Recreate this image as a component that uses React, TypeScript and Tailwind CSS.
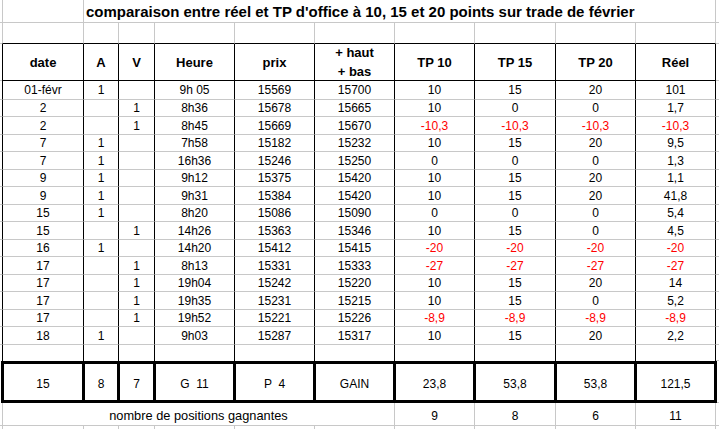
import React from "react";

type Row = {
  d: string;
  a: string;
  v: string;
  h: string;
  p: string;
  hb: string;
  t10: string;
  t15: string;
  t20: string;
  r: string;
  red?: boolean;
};

const rows: Row[] = [
  { d: "01-févr", a: "1", v: "", h: "9h 05", p: "15569", hb: "15700", t10: "10", t15: "15", t20: "20", r: "101" },
  { d: "2", a: "", v: "1", h: "8h36", p: "15678", hb: "15665", t10: "10", t15: "0", t20: "0", r: "1,7" },
  { d: "2", a: "", v: "1", h: "8h45", p: "15669", hb: "15670", t10: "-10,3", t15: "-10,3", t20: "-10,3", r: "-10,3", red: true },
  { d: "7", a: "1", v: "", h: "7h58", p: "15182", hb: "15232", t10: "10", t15: "15", t20: "20", r: "9,5" },
  { d: "7", a: "1", v: "", h: "16h36", p: "15246", hb: "15250", t10: "0", t15: "0", t20: "0", r: "1,3" },
  { d: "9", a: "1", v: "", h: "9h12", p: "15375", hb: "15420", t10: "10", t15: "15", t20: "20", r: "1,1" },
  { d: "9", a: "1", v: "", h: "9h31", p: "15384", hb: "15420", t10: "10", t15: "15", t20: "20", r: "41,8" },
  { d: "15", a: "1", v: "", h: "8h20", p: "15086", hb: "15090", t10: "0", t15: "0", t20: "0", r: "5,4" },
  { d: "15", a: "", v: "1", h: "14h26", p: "15363", hb: "15346", t10: "10", t15: "15", t20: "0", r: "4,5" },
  { d: "16", a: "1", v: "", h: "14h20", p: "15412", hb: "15415", t10: "-20", t15: "-20", t20: "-20", r: "-20", red: true },
  { d: "17", a: "", v: "1", h: "8h13", p: "15331", hb: "15333", t10: "-27", t15: "-27", t20: "-27", r: "-27", red: true },
  { d: "17", a: "", v: "1", h: "19h04", p: "15242", hb: "15220", t10: "10", t15: "15", t20: "20", r: "14" },
  { d: "17", a: "", v: "1", h: "19h35", p: "15231", hb: "15215", t10: "10", t15: "15", t20: "0", r: "5,2" },
  { d: "17", a: "", v: "1", h: "19h52", p: "15221", hb: "15226", t10: "-8,9", t15: "-8,9", t20: "-8,9", r: "-8,9", red: true },
  { d: "18", a: "1", v: "", h: "9h03", p: "15287", hb: "15317", t10: "10", t15: "15", t20: "20", r: "2,2" },
];

const rowH = [
  "h-[19px]", "h-[17px]", "h-[18px]", "h-[17px]", "h-[18px]", "h-[17px]", "h-[18px]", "h-[17px]",
  "h-[18px]", "h-[17px]", "h-[18px]", "h-[17px]", "h-[18px]", "h-[17px]", "h-[18px]",
];

// widths for columns (border-box) in normal rows; first includes left border
const W = ["w-[82px]", "w-[35px]", "w-[36px]", "w-[80px]", "w-[80px]", "w-[80px]", "w-[80px]", "w-[81px]", "w-[80px]", "w-[80px]"];

function Cell({
  w,
  className = "",
  children,
}: {
  w: string;
  className?: string;
  children?: React.ReactNode;
}) {
  return (
    <div className={`${w} shrink-0 flex items-center justify-center whitespace-pre ${className}`}>
      {children}
    </div>
  );
}

export default function App() {
  return (
    <div
      className="w-[719px] h-[429px] overflow-hidden bg-white text-black text-[12px] leading-none"
      style={{ fontFamily: '"Liberation Sans", Arial, sans-serif' }}
    >
      {/* Title row */}
      <div className="flex h-[23px]">
        <div className="w-[2px] shrink-0 border-b border-b-[#c8c8c8]" />
        <Cell w="w-[82px]" className="border-l border-r border-b border-l-[#c8c8c8] border-r-[#c8c8c8] border-b-[#c8c8c8]" />
        <div className="w-[632px] shrink-0 flex items-end pb-[3px] pl-[2px] border-r border-b border-r-[#c8c8c8] border-b-[#c8c8c8] text-[15px] font-bold whitespace-nowrap">
          comparaison entre réel et TP d'office à 10, 15 et 20 points sur trade de février
        </div>
        <div className="flex-1 border-b border-b-[#c8c8c8]" />
      </div>

      {/* Empty row */}
      <div className="flex h-[21px]">
        <div className="w-[2px] shrink-0 border-b border-b-[#c8c8c8]" />
        {W.map((w, i) => (
          <Cell
            key={i}
            w={w}
            className={`border-r border-b border-r-[#c8c8c8] border-b-black ${i === 0 ? "border-l border-l-[#c8c8c8]" : ""}`}
          />
        ))}
        <div className="flex-1 border-b border-b-[#c8c8c8]" />
      </div>

      {/* Header row */}
      <div className="flex h-[37px] font-bold text-[13px]">
        <div className="w-[2px] shrink-0 border-b border-b-[#c8c8c8]" />
        {["date", "A", "V", "Heure", "prix", "", "TP 10", "TP 15", "TP 20", "Réel"].map((t, i) => (
          <Cell
            key={i}
            w={W[i]}
            className={`border-r border-b border-r-black border-b-black ${i === 0 ? "border-l border-l-black" : ""}`}
          >
            {i === 5 ? (
              <div className="flex flex-col items-center leading-[19px]">
                <span>+ haut</span>
                <span>+ bas</span>
              </div>
            ) : (
              t
            )}
          </Cell>
        ))}
        <div className="flex-1 border-b border-b-[#c8c8c8]" />
      </div>

      {/* Data rows */}
      {rows.map((r, ri) => {
        const vals = [r.d, r.a, r.v, r.h, r.p, r.hb, r.t10, r.t15, r.t20, r.r];
        return (
          <div key={ri} className={`flex ${rowH[ri]}`}>
            <div className="w-[2px] shrink-0 border-b border-b-[#c8c8c8]" />
            {vals.map((t, i) => (
              <Cell
                key={i}
                w={W[i]}
                className={`border-r border-b border-r-black border-b-[#c8c8c8] ${i === 0 ? "border-l border-l-black" : ""} ${
                  r.red && i >= 6 ? "text-[#ff0000]" : ""
                }`}
              >
                {t}
              </Cell>
            ))}
            <div className="flex-1 border-b border-b-[#c8c8c8]" />
          </div>
        );
      })}

      {/* Empty row before summary */}
      <div className="flex h-[16px]">
        <div className="w-[2px] shrink-0" />
        {W.map((w, i) => (
          <Cell key={i} w={w} className={`border-r border-r-black ${i === 0 ? "border-l border-l-black" : ""}`} />
        ))}
        <div className="flex-1 border-b border-b-[#c8c8c8]" />
      </div>

      {/* Summary row */}
      <div className="flex h-[42px]">
        <div className="w-[1px] shrink-0" />
        {[
          ["w-[84px]", "15"],
          ["w-[35px]", "8"],
          ["w-[36px]", "7"],
          ["w-[80px]", "G  11"],
          ["w-[80px]", "P  4"],
          ["w-[80px]", "GAIN"],
          ["w-[80px]", "23,8"],
          ["w-[81px]", "53,8"],
          ["w-[80px]", "53,8"],
          ["w-[80px]", "121,5"],
        ].map(([w, t], i) => (
          <Cell
            key={i}
            w={w}
            className={`pt-[3px] border-t-[3px] border-b-[3px] border-r-[3px] border-t-black border-b-black border-r-black ${
              i === 0 ? "border-l-[3px] border-l-black" : ""
            }`}
          >
            {t}
          </Cell>
        ))}
        <div className="flex-1 border-b border-b-[#c8c8c8]" />
      </div>

      {/* Count row */}
      <div className="flex h-[23px]">
        <div className="w-[2px] shrink-0 border-b border-b-[#c8c8c8]" />
        <Cell w="w-[393px]" className="pt-[4px] text-[12.8px] border-l border-r border-b border-l-[#c8c8c8] border-r-[#c8c8c8] border-b-[#c8c8c8]">
          nombre de positions gagnantes
        </Cell>
        {[
          ["w-[80px]", "9"],
          ["w-[81px]", "8"],
          ["w-[80px]", "6"],
          ["w-[80px]", "11"],
        ].map(([w, t], i) => (
          <Cell key={i} w={w} className="pt-[4px] border-r border-b border-r-[#c8c8c8] border-b-[#c8c8c8]">
            {t}
          </Cell>
        ))}
        <div className="flex-1 border-b border-b-[#c8c8c8]" />
      </div>

      {/* Trailing row */}
      <div className="flex h-[10px]">
        <div className="w-[2px] shrink-0" />
        {W.map((w, i) => (
          <Cell
            key={i}
            w={w}
            className={`border-r border-r-[#c8c8c8] ${i === 0 ? "border-l border-l-[#c8c8c8]" : ""}`}
          />
        ))}
        <div className="flex-1" />
      </div>
    </div>
  );
}
